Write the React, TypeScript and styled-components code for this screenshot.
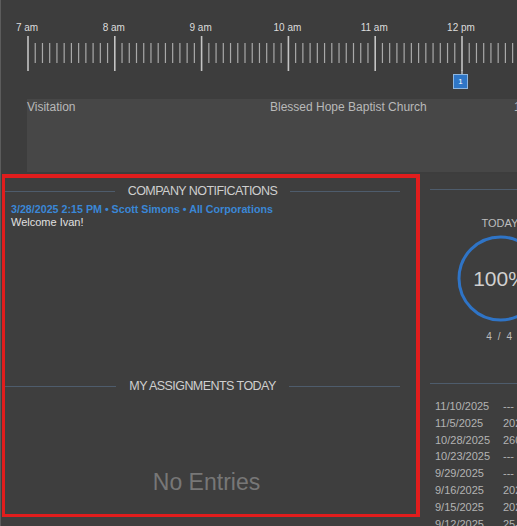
import { FC, Fragment } from 'react'
import styled, { createGlobalStyle } from 'styled-components'

const GlobalStyle = createGlobalStyle`
  html, body {
    margin: 0;
    padding: 0;
    background: #3d3d3d;
    overflow: hidden;
  }
  body {
    font-family: 'Liberation Sans', Arial, sans-serif;
  }
`

const HOUR = 86.8
const START = 27
const HOURS = ['7 am', '8 am', '9 am', '10 am', '11 am', '12 pm']

const Page = styled.div`
  width: 517px;
  height: 526px;
  border-left: 1px solid #5c5c5c;
  box-sizing: border-box;
  display: flex;
  flex-direction: column;
  overflow: hidden;
`

const Ruler = styled.div`
  position: relative;
  height: 99px;
  flex: none;
`

const HourLabel = styled.span`
  position: absolute;
  top: 22px;
  transform: translateX(-50%);
  font-size: 10px;
  color: #dcdcdc;
  white-space: nowrap;
`

const Marker = styled.div`
  position: absolute;
  left: 452px;
  top: 74px;
  width: 13px;
  height: 13px;
  border: 1px solid #8db6e0;
  background: #2f76c6;
  color: #fff;
  font-size: 8px;
  display: flex;
  align-items: center;
  justify-content: center;
`

const VisitRow = styled.div`
  margin-left: 26px;
  height: 73px;
  background: #474747;
  display: grid;
  grid-template-columns: 243px 244px auto;
  align-items: start;
  font-size: 12px;
  color: #b9b9b9;
  white-space: nowrap;
  flex: none;
`

const VisitCell = styled.span`
  padding-top: 1px;
  line-height: 14px;
`

const Lower = styled.div`
  margin-top: 2px;
  display: flex;
  gap: 10px;
  flex: none;
  background: #3e3e3e;
  padding-bottom: 9px;
`

const RedPanel = styled.section`
  margin-left: 1px;
  width: 418px;
  height: 343px;
  box-sizing: border-box;
  border: 3px solid #e11d1d;
  border-top-width: 4px;
  border-right-width: 4px;
  padding: 0 16px 0 0;
  display: flex;
  flex-direction: column;
  flex: none;
`

const SectionTitle = styled.div<{ $top: number }>`
  display: flex;
  align-items: center;
  gap: 13px;
  margin-top: ${p => p.$top}px;
  font-size: 12.5px;
  letter-spacing: -0.55px;
  color: #cfcfcf;
  white-space: nowrap;

  &::before,
  &::after {
    content: '';
    flex: 1;
    height: 1px;
    background: #4e5c6c;
  }
`

const Meta = styled.div`
  margin: 5px 0 0 6px;
  font-size: 10.7px;
  font-weight: bold;
  color: #3a87d6;
  white-space: nowrap;
`

const Message = styled.div`
  margin: 1px 0 0 6px;
  font-size: 11px;
  color: #e0e0e0;
`

const Empty = styled.div`
  margin-top: 76px;
  text-align: center;
  font-size: 23px;
  color: #777;
  padding-left: 8px;
`

const Side = styled.section`
  width: 140px;
  flex: none;
  display: flex;
  flex-direction: column;
  align-items: center;
`

const SideLine = styled.div<{ $top: number }>`
  align-self: stretch;
  height: 1px;
  background: #4e5c6c;
  margin-top: ${p => p.$top}px;
`

const TodayLabel = styled.div`
  margin-top: 27px;
  font-size: 11px;
  color: #bdbdbd;
`

const Ring = styled.div`
  position: relative;
  margin-top: 6px;
  width: 87px;
  height: 87px;
  display: flex;
  align-items: center;
  justify-content: center;
`

const RingSvg = styled.svg`
  position: absolute;
  inset: 0;
`

const Percent = styled.span`
  position: relative;
  font-size: 21px;
  color: #d0d0d0;
`

const Count = styled.div`
  margin-top: 9px;
  font-size: 10px;
  letter-spacing: 1.6px;
  color: #bdbdbd;
`

const Table = styled.div`
  align-self: stretch;
  margin-top: 15px;
  padding-left: 5px;
  display: grid;
  grid-template-columns: 68px auto;
  row-gap: 2.8px;
  font-size: 11px;
  line-height: 14px;
  color: #b3b3b3;
  white-space: nowrap;
`

const history = [
  ['11/10/2025', '---'],
  ['11/5/2025', '2025-0114'],
  ['10/28/2025', '2601'],
  ['10/23/2025', '---'],
  ['9/29/2025', '---'],
  ['9/16/2025', '2025-0098'],
  ['9/15/2025', '2025-0097'],
  ['9/12/2025', '25-0912'],
]

const Ticks: FC = () => {
  const lines = []
  for (let i = 0; ; i++) {
    const x = START + (i * HOUR) / 12
    if (x > 520) break
    const major = i % 12 === 0
    lines.push(
      <line
        key={i}
        x1={x}
        x2={x}
        y1={major ? 36 : 43}
        y2={major ? 71 : 63}
        stroke={major ? '#c4c4c4' : '#a9a9a9'}
        strokeWidth={major ? 1.6 : 1.2}
      />
    )
  }
  return (
    <svg width="517" height="99" style={{ position: 'absolute', left: 0, top: 0 }}>
      {lines}
      <line x1={461} x2={461} y1={70} y2={75} stroke="#c4c4c4" strokeWidth={1.4} />
    </svg>
  )
}

const App: FC = () => (
  <>
    <GlobalStyle />
    <Page>
      <Ruler>
        <Ticks />
        {HOURS.map((h, i) => (
          <HourLabel key={h} style={{ left: START - 1 + i * HOUR }}>
            {h}
          </HourLabel>
        ))}
        <Marker>1</Marker>
      </Ruler>
      <VisitRow>
        <VisitCell>Visitation</VisitCell>
        <VisitCell>Blessed Hope Baptist Church</VisitCell>
        <VisitCell>1</VisitCell>
      </VisitRow>
      <Lower>
        <RedPanel>
          <SectionTitle $top={6}>COMPANY NOTIFICATIONS</SectionTitle>
          <Meta>3/28/2025 2:15 PM • Scott Simons • All Corporations</Meta>
          <Message>Welcome Ivan!</Message>
          <SectionTitle $top={151}>MY ASSIGNMENTS TODAY</SectionTitle>
          <Empty>No Entries</Empty>
        </RedPanel>
        <Side>
          <SideLine $top={15} />
          <TodayLabel>TODAY</TodayLabel>
          <Ring>
            <RingSvg viewBox="0 0 87 87">
              <circle cx="43.5" cy="43.5" r="41.5" fill="none" stroke="#2f74c6" strokeWidth="3" />
            </RingSvg>
            <Percent>100%</Percent>
          </Ring>
          <Count>4 / 4</Count>
          <SideLine $top={41} />
          <Table>
            {history.map(([d, v]) => (
              <Fragment key={d}>
                <span>{d}</span>
                <span>{v}</span>
              </Fragment>
            ))}
          </Table>
        </Side>
      </Lower>
    </Page>
  </>
)

export default App
